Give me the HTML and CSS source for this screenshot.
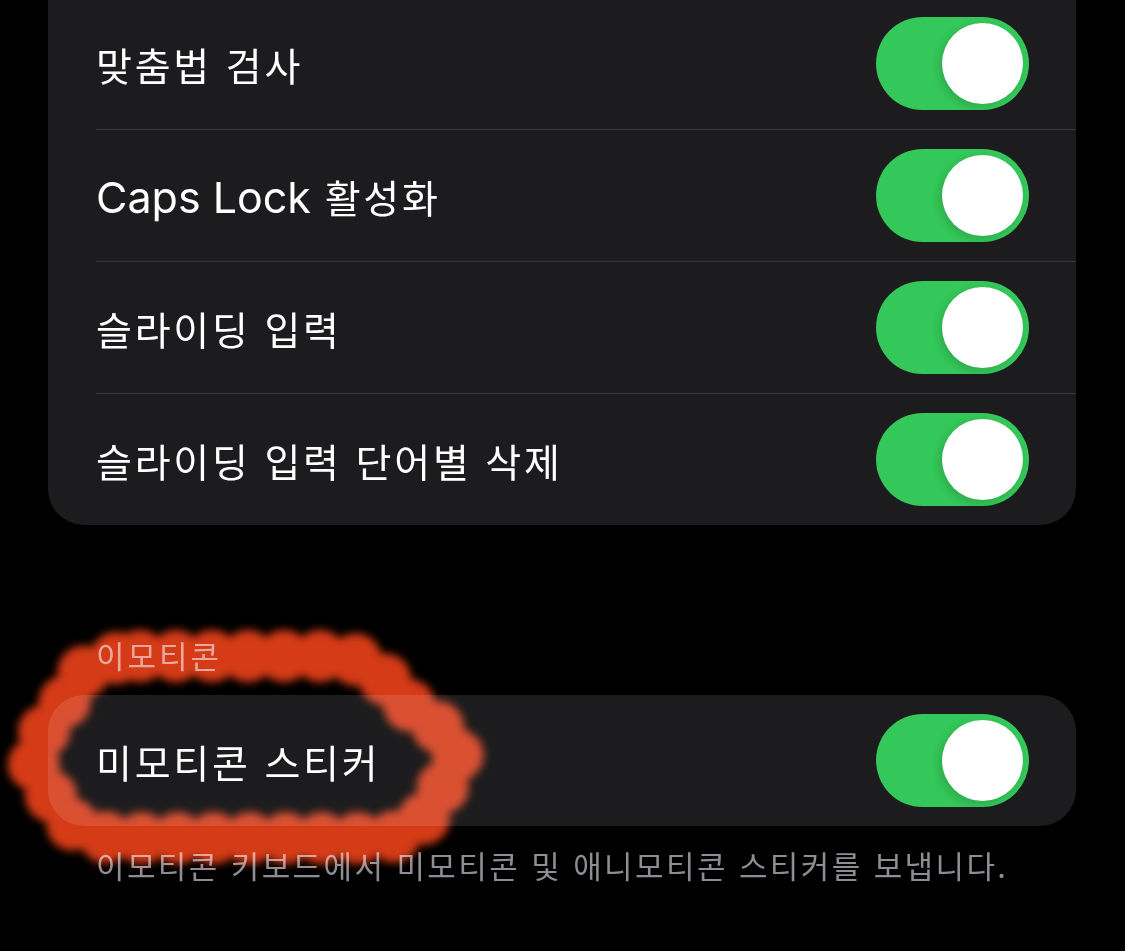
FILE: index.html
```html
<!DOCTYPE html>
<html lang="ko">
<head>
<meta charset="utf-8">
<title>키보드 설정</title>
<link rel="stylesheet" href="styles.css">
</head>
<body>
<div class="page">
  <div class="group first">
    <div class="row"><div class="row-inner"><span class="label">맞춤법 검사</span><span class="toggle"><span class="knob"></span></span></div></div>
    <div class="row"><div class="row-inner"><span class="label"><span class="latin">Caps Lock</span> 활성화</span><span class="toggle"><span class="knob"></span></span></div></div>
    <div class="row"><div class="row-inner"><span class="label">슬라이딩 입력</span><span class="toggle"><span class="knob"></span></span></div></div>
    <div class="row"><div class="row-inner"><span class="label">슬라이딩 입력 단어별 삭제</span><span class="toggle"><span class="knob"></span></span></div></div>
  </div>

  <div class="section-header">이모티콘</div>
  <div class="group">
    <div class="row"><div class="row-inner"><span class="label">미모티콘 스티커</span><span class="toggle"><span class="knob"></span></span></div></div>
  </div>
  <div class="section-footer">이모티콘 키보드에서 미모티콘 및 애니모티콘 스티커를 보냅니다.</div>

  <svg class="annotation" width="1125" height="951" viewBox="0 0 1125 951" aria-hidden="true">
    <defs>
      <filter id="soft" filterUnits="userSpaceOnUse" x="0" y="0" width="1125" height="951">
        <feGaussianBlur stdDeviation="4.5"/>
      </filter>
    </defs>
    <g filter="url(#soft)" fill="none" stroke="#d43a16" stroke-linecap="round" stroke-linejoin="round">
      <path stroke-width="52" stroke-dasharray="0 36" d="M 140 656 L 330 656 Q 376 656 394 694 L 450 736 Q 464 752 452 772 L 428 812 Q 414 838 378 838 L 120 838 Q 80 838 62 814 L 38 775 Q 28 757 38 740 L 66 700 Q 78 656 140 656 Z"/>
    </g>
  </svg>
</div>
</body>
</html>
```
FILE: styles.css
```css
html, body {
  margin: 0;
  padding: 0;
  background: #000;
}

body {
  font-family: Inter, "Noto Sans CJK KR", sans-serif;
  color: #fff;
}

.page {
  position: relative;
  width: 1125px;
  height: 951px;
  overflow: hidden;
  box-sizing: border-box;
  padding: 0 49px 0 48px;
}

.group {
  background: #1c1c1e;
  border-radius: 36px;
  overflow: hidden;
}

.group.first {
  margin-top: -2px;
  border-top-left-radius: 0;
  border-top-right-radius: 0;
}

.row {
  padding-left: 48px;
}

.row-inner {
  height: 131px;
  display: flex;
  align-items: center;
  justify-content: space-between;
  padding-right: 47px;
  border-bottom: 1px solid #38383a;
}

.row:last-child .row-inner {
  border-bottom: none;
}

.label {
  font-family: "Noto Sans CJK KR", sans-serif;
  font-size: 39px;
  letter-spacing: 2.8px;
  color: #fff;
  white-space: nowrap;
}

.latin {
  font-family: Inter, sans-serif;
  font-size: 43px;
  letter-spacing: 0;
}

.toggle {
  position: relative;
  width: 153px;
  height: 93px;
  border-radius: 47px;
  background: #34c759;
  flex: none;
}

.knob {
  position: absolute;
  top: 6px;
  right: 6px;
  width: 81px;
  height: 81px;
  border-radius: 50%;
  background: #fff;
  box-shadow: -3px 3px 8px rgba(0, 0, 0, 0.14);
}

.section-header {
  margin-top: 110px;
  margin-bottom: 20px;
  padding-left: 48px;
  height: 40px;
  line-height: 40px;
  font-family: "Noto Sans CJK KR", sans-serif;
  font-size: 31px;
  letter-spacing: 3px;
  color: #8d8d93;
}

.section-footer {
  margin-top: 19px;
  padding-left: 48px;
  height: 40px;
  line-height: 40px;
  font-family: "Noto Sans CJK KR", sans-serif;
  font-size: 31px;
  letter-spacing: 2.4px;
  color: #8d8d93;
  white-space: nowrap;
}

.annotation {
  position: absolute;
  top: 0;
  left: 0;
  pointer-events: none;
  mix-blend-mode: screen;
}
```
